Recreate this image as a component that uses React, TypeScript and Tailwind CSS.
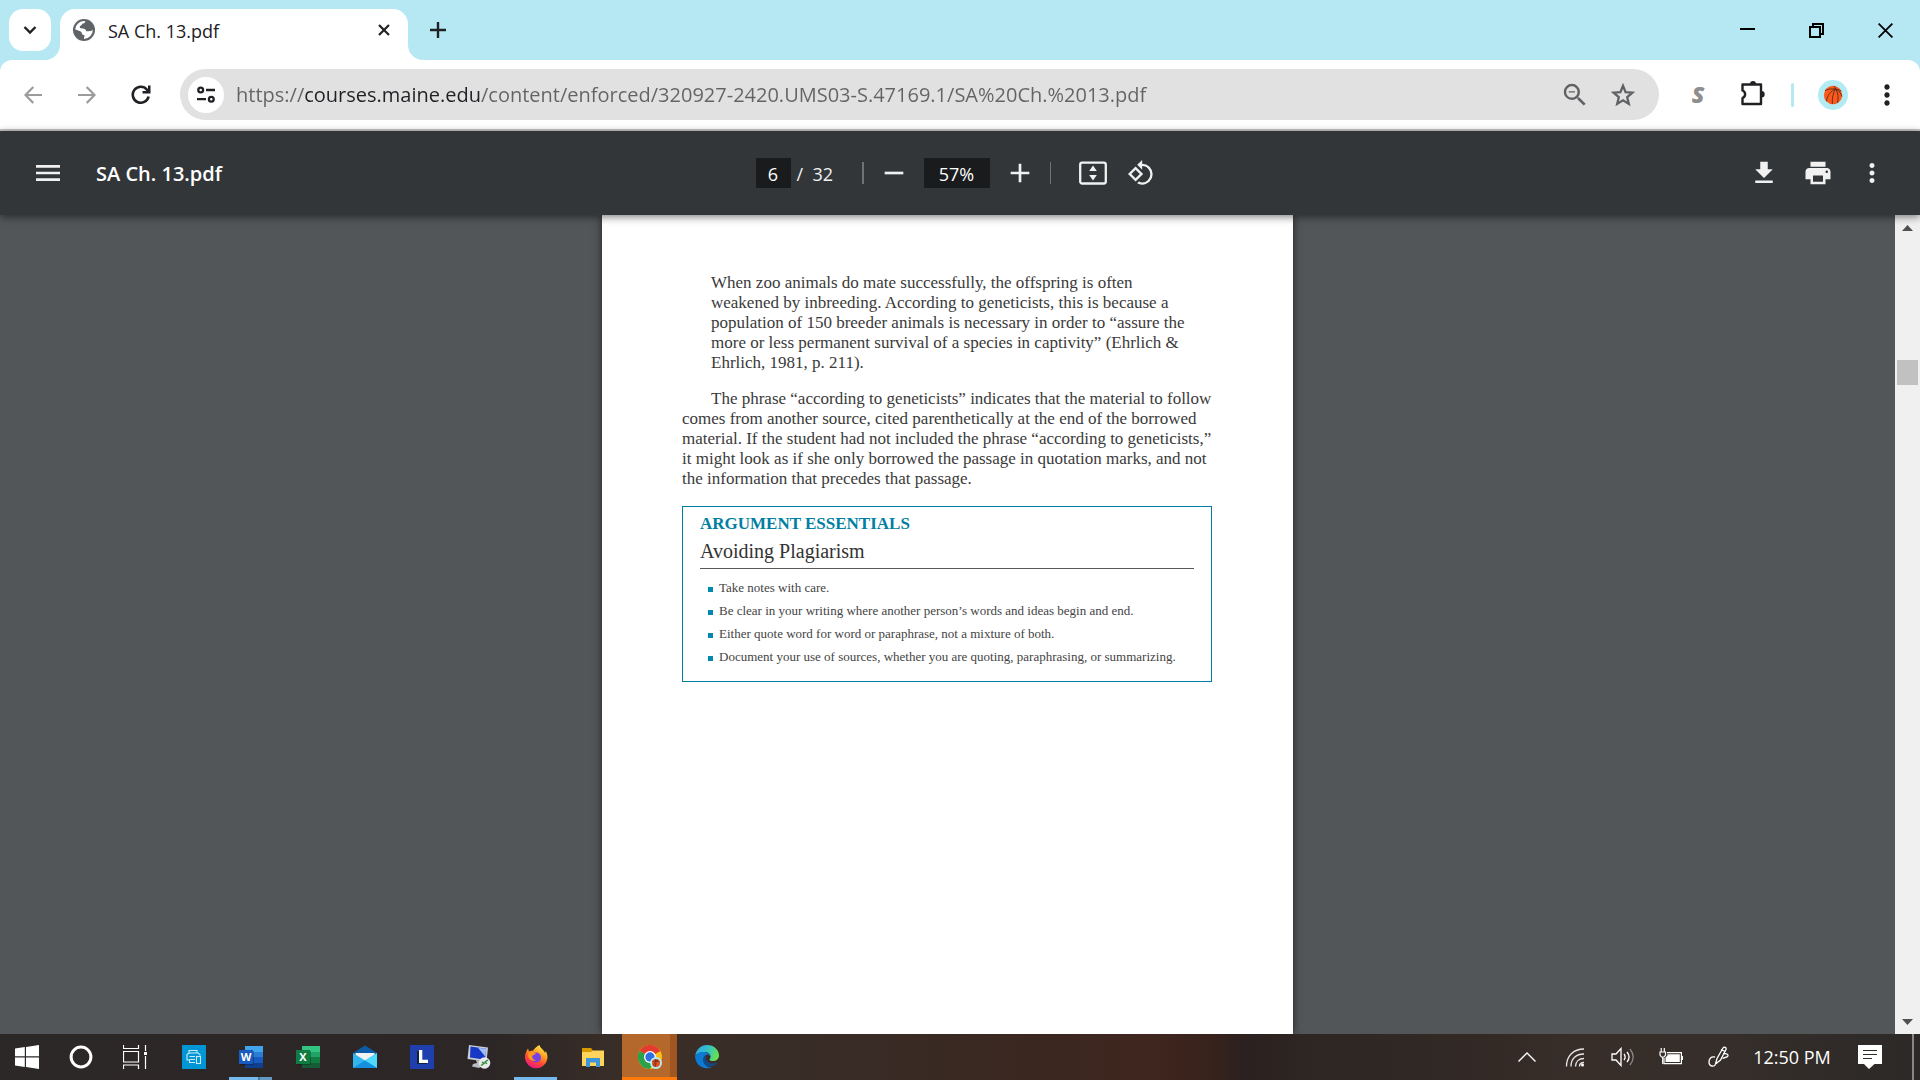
import { useState } from 'react'
import type { ReactNode } from 'react'
import {
  MdAdd,
  MdFileDownload,
  MdMenu,
  MdMoreVert,
  MdOutlineRotate90DegreesCcw,
  MdPrint,
  MdRemove,
  MdZoomOut,
} from 'react-icons/md'

type IconButtonProps = {
  label: string
  className: string
  children: ReactNode
}

function IconButton({ label, className, children }: IconButtonProps): React.ReactElement {
  return (
    <button aria-label={label} className={`flex shrink-0 items-center justify-center ${className}`}>
      {children}
    </button>
  )
}

function Basketball({ className }: { className: string }): React.ReactElement {
  return (
    <svg viewBox="0 0 30 30" className={className}>
      <circle cx="15" cy="15" r="15" fill="#b2ebf2" />
      <circle cx="15" cy="15" r="9.200" fill="#fb5a1c" />
      <g fill="none" stroke="#5a2a18" strokeWidth="0.900">
        <path d="M7 10.500c4-2 11-2.500 16.300.5" />
        <path d="M16 6c1 1 1.500 2 1.600 2.800C13 11 9 15.500 8.500 21.200" />
        <path d="M17.600 8.800C15 13 14 18 14.300 24" />
        <path d="M17.600 8.800c2.400 4 3.200 9 1.900 14.200" />
        <path d="M17.600 8.800c3 1.700 5.200 4.500 6.400 7.700" />
      </g>
    </svg>
  )
}

function TabStrip(): React.ReactElement {
  return (
    <header className="flex h-[60px] shrink-0 items-end bg-[#b5e8f3]">
      <div className="flex h-[51px] items-start pl-[9px]">
        <IconButton label="Search tabs" className="h-[42px] w-[42px] rounded-[14px] bg-white">
          <svg viewBox="0 0 14 10" className="h-[10px] w-[14px]">
            <path d="M1.500 2l5.500 5.500L12.500 2" fill="none" stroke="#202124" strokeWidth="2.400" />
          </svg>
        </IconButton>
      </div>

      {/* Active tab, flared into the toolbar below */}
      <div className="relative ml-[9px] flex h-[51px] w-[348px] items-center rounded-t-[15px] bg-white pr-3 pb-[9px] pl-[13px]">
        <svg viewBox="0 0 15 15" className="absolute bottom-0 -left-[15px] h-[15px] w-[15px]">
          <path d="M15 0v15H0C8.300 15 15 8.300 15 0z" fill="#fff" />
        </svg>
        <svg viewBox="0 0 15 15" className="absolute -right-[15px] bottom-0 h-[15px] w-[15px]">
          <path d="M0 0v15h15C6.700 15 0 8.300 0 0z" fill="#fff" />
        </svg>
        <svg viewBox="0 0 22 22" className="h-[22px] w-[22px]">
          <circle cx="11" cy="11" r="11" fill="#5f6368" />
          <path
            d="M12.500 2.200c-.3 1.800-1.600 2.300-3.200 2.600-.4 1.700-1.700 1.700-2.500 2.700-.4 1.300.8 2 2.200 2 2.500-.2 4 1 4.300 2.800 1.200.2 2-.2 3.200-.2 1.500 0 2.700-.6 3.300-1.600A9 9 0 0 1 11 20c-.3-1.500.7-2.200.5-3.700-1.700-.2-2.800-1-2.800-2.800C7 11.500 4.500 11.500 2.200 10.500A9 9 0 0 1 12.500 2.200z"
            fill="#fff"
          />
          <path d="M12.500 2.200c-.3 1.800-1.300 2.500.5 4.300 1.200.8 1 2.500 3 2.500 1 0 2.300-.2 3.700.8A9 9 0 0 0 12.500 2.200z" fill="#5f6368" />
        </svg>
        <span className="ml-[13px] flex-1 pt-0.5 text-[18px] text-[#202124]">SA Ch. 13.pdf</span>
        <IconButton label="Close tab" className="h-6 w-6">
          <svg viewBox="0 0 12 12" className="h-3 w-3">
            <path d="M1 1l10 10M11 1L1 11" stroke="#202124" strokeWidth="2.200" />
          </svg>
        </IconButton>
      </div>

      <div className="flex h-[51px] flex-1 items-start pl-[9px]">
        <IconButton label="New tab" className="h-[42px] w-[42px]">
          <svg viewBox="0 0 16 16" className="h-4 w-4">
            <path d="M8 0v16M0 8h16" stroke="#202124" strokeWidth="2.400" />
          </svg>
        </IconButton>
      </div>

      <div className="flex h-[60px]">
        <IconButton label="Minimize" className="w-[69px]">
          <svg viewBox="0 0 15 16" className="h-4 w-[15px]">
            <path d="M0 7h15" stroke="#000" strokeWidth="2" />
          </svg>
        </IconButton>
        <IconButton label="Restore" className="w-[69px]">
          <svg viewBox="0 0 15 15" className="h-[15px] w-[15px]">
            <path d="M1 4h10v10H1zM4 4V1h10v10h-3" fill="none" stroke="#000" strokeWidth="2" />
          </svg>
        </IconButton>
        <IconButton label="Close" className="w-[69px]">
          <svg viewBox="0 0 15 15" className="h-[15px] w-[15px]">
            <path d="M.6.6l13.800 13.800M14.400.6L.6 14.400" stroke="#000" strokeWidth="1.800" />
          </svg>
        </IconButton>
      </div>
    </header>
  )
}

function AddressBar(): React.ReactElement {
  const [url, setUrl] = useState('https://courses.maine.edu/content/enforced/320927-2420.UMS03-S.47169.1/SA%20Ch.%2013.pdf')

  return (
    <div className="shrink-0 bg-[#b5e8f3]">
      <nav className="flex h-[71px] items-center rounded-t-[12px] border-b-2 border-[#c7c7c7] bg-white px-1.5">
        <IconButton label="Back" className="h-12 w-[54px]">
          <svg viewBox="0 0 18 18" className="h-[18px] w-[18px]">
            <path d="M18 9H1.800M9.300 1L1.500 9l7.800 8" fill="none" stroke="#9b9b9b" strokeWidth="2.200" />
          </svg>
        </IconButton>
        <IconButton label="Forward" className="h-12 w-[54px]">
          <svg viewBox="0 0 18 18" className="h-[18px] w-[18px]">
            <path d="M0 9h16.200M8.700 1l7.800 8-7.800 8" fill="none" stroke="#9b9b9b" strokeWidth="2.200" />
          </svg>
        </IconButton>
        <IconButton label="Reload" className="h-12 w-[54px]">
          <svg viewBox="0 0 20 20" className="h-5 w-5">
            <path d="M17.600 11.500A8 8 0 1 1 16 4.700L18 7" fill="none" stroke="#202124" strokeWidth="2.600" />
            <path d="M19.500.5v8h-8V6h5.500V.5z" fill="#202124" />
          </svg>
        </IconButton>

        <div className="mx-3 flex h-[51px] min-w-0 flex-1 items-center rounded-full bg-[#e1e1e1] pr-3 pl-2">
          <IconButton label="View site information" className="h-9 w-9 rounded-full bg-white">
            <svg viewBox="0 0 18 17" className="h-[17px] w-[18px]" fill="none" stroke="#202124" strokeWidth="2.300">
              <circle cx="3.700" cy="4" r="2.400" />
              <path d="M9 4h9M0 13.200h9" />
              <circle cx="14.300" cy="13.200" r="2.400" />
            </svg>
          </IconButton>
          {/* Host part is darker than the scheme and path */}
          <input
            aria-label="Address"
            value={url}
            onChange={(e) => setUrl(e.target.value)}
            className="ml-3 h-10 min-w-0 flex-1 bg-[linear-gradient(90deg,#636363_68px,#202124_68px,#202124_245px,#636363_245px)] bg-clip-text text-[20px] text-transparent outline-none"
          />
          <IconButton label="Zoom" className="h-10 w-12">
            <MdZoomOut className="h-[30px] w-[30px] text-[#5f6164]" />
          </IconButton>
          <IconButton label="Bookmark this tab" className="h-10 w-12">
            <svg viewBox="0 0 24 24" className="h-6 w-6">
              <path
                d="M12 2.800l2.600 6.400 6.800.5-5.200 4.500 1.600 6.700-5.800-3.600-5.800 3.600 1.600-6.700-5.200-4.500 6.800-.5z"
                fill="none"
                stroke="#5f6164"
                strokeWidth="2.300"
              />
            </svg>
          </IconButton>
        </div>

        <IconButton label="S extension" className="h-12 w-[54px] text-[23px] font-extrabold text-[#8e8e8e] italic">
          S
        </IconButton>
        <IconButton label="Extensions" className="h-12 w-[54px]">
          <svg viewBox="0 0 28 28" className="h-7 w-7">
            <path
              d="M5 3.500h18v19.500H4.500v-6c3.500-1.500 3.500-6 0-7.500V3.500z"
              fill="none"
              stroke="#202124"
              strokeWidth="2.400"
              strokeLinejoin="round"
            />
            <path d="M12 3a3 3 0 0 1 6 0zM23.500 10a3.200 3.200 0 0 1 0 6.400z" fill="#202124" />
          </svg>
        </IconButton>
        <span className="mx-3 h-6 w-[3px] rounded-full bg-[#b5e8f3]" />
        <IconButton label="Profile" className="h-12 w-[54px]">
          <Basketball className="h-[30px] w-[30px]" />
        </IconButton>
        <IconButton label="Customize and control" className="h-12 w-[54px]">
          <MdMoreVert className="h-8 w-8 text-[#202124]" />
        </IconButton>
      </nav>
    </div>
  )
}

function PdfToolbar(): React.ReactElement {
  const [page, setPage] = useState('6')
  const [zoom, setZoom] = useState('57%')

  return (
    <div className="relative z-10 grid h-[84px] shrink-0 grid-cols-[1fr_auto_1fr] items-center bg-[#323639] text-[#f1f1f1] shadow-[0_2px_8px_rgba(0,0,0,0.5)]">
      <div className="flex items-center pl-6">
        <IconButton label="Menu" className="h-12 w-12">
          <MdMenu className="h-8 w-8" />
        </IconButton>
        <h1 className="ml-6 pt-0.5 text-[20px] font-semibold text-white">SA Ch. 13.pdf</h1>
      </div>

      <div className="flex items-center">
        <input
          aria-label="Page number"
          value={page}
          onChange={(e) => setPage(e.target.value)}
          className="h-[30px] w-[35px] bg-[#191b1c] pt-0.5 text-center text-[18px] text-white outline-none"
        />
        <span className="w-[71px] pt-0.5 pl-1.5 text-[18px] whitespace-pre">/  32</span>
        <span className="h-[22px] w-0.5 bg-[#707375]" />
        <IconButton label="Zoom out" className="mx-1.5 h-12 w-12">
          <MdRemove className="h-8 w-8" />
        </IconButton>
        <input
          aria-label="Zoom level"
          value={zoom}
          onChange={(e) => setZoom(e.target.value)}
          className="h-[30px] w-[66px] bg-[#191b1c] pt-0.5 text-center text-[18px] text-white outline-none"
        />
        <IconButton label="Zoom in" className="mx-1.5 h-12 w-12">
          <MdAdd className="h-8 w-8" />
        </IconButton>
        <span className="mr-[18px] h-[22px] w-px bg-[#707375]" />
        <IconButton label="Fit to page" className="h-12 w-12">
          <svg viewBox="0 0 28 24" className="h-6 w-7">
            <rect x="1.200" y="1.700" width="25.600" height="20.800" rx="2" fill="none" stroke="#f1f1f1" strokeWidth="2.300" />
            <path d="M14 4.500l3.800 5.500h-7.600zM14 19.500l3.800-5.500h-7.600z" fill="#f1f1f1" />
          </svg>
        </IconButton>
        <IconButton label="Rotate" className="h-12 w-12">
          <MdOutlineRotate90DegreesCcw className="h-[28px] w-[28px]" />
        </IconButton>
      </div>

      <div className="flex items-center justify-end pr-[21px]">
        <IconButton label="Download" className="h-12 w-[54px]">
          <MdFileDownload className="h-[30px] w-[30px]" />
        </IconButton>
        <IconButton label="Print" className="h-12 w-[54px]">
          <MdPrint className="h-[30px] w-[30px]" />
        </IconButton>
        <IconButton label="More actions" className="h-12 w-[54px]">
          <MdMoreVert className="h-[30px] w-[30px]" />
        </IconButton>
      </div>
    </div>
  )
}

const quoteLines = [
  'When zoo animals do mate successfully, the offspring is often',
  'weakened by inbreeding. According to geneticists, this is because a',
  'population of 150 breeder animals is necessary in order to “assure the',
  'more or less permanent survival of a species in captivity” (Ehrlich &',
  'Ehrlich, 1981, p. 211).',
]

const bodyLines = [
  'The phrase “according to geneticists” indicates that the material to follow',
  'comes from another source, cited parenthetically at the end of the borrowed',
  'material. If the student had not included the phrase “according to geneticists,”',
  'it might look as if she only borrowed the passage in quotation marks, and not',
  'the information that precedes that passage.',
]

const tips = [
  'Take notes with care.',
  'Be clear in your writing where another person’s words and ideas begin and end.',
  'Either quote word for word or paraphrase, not a mixture of both.',
  'Document your use of sources, whether you are quoting, paraphrasing, or summarizing.',
]

function PdfPage(): React.ReactElement {
  return (
    <article className="w-[691px] bg-white pt-[58px] pr-[81px] pl-20 font-['Liberation_Serif',serif] text-[17px] leading-5 whitespace-nowrap text-[#3a3a3a] shadow-[0_0_8px_rgba(0,0,0,0.6)]">
      <blockquote className="pl-[29px]">
        {quoteLines.map((line) => (
          <span key={line} className="block">{line}</span>
        ))}
      </blockquote>
      <p className="mt-4">
        {bodyLines.map((line) => (
          <span key={line} className="block first:pl-[29px]">{line}</span>
        ))}
      </p>

      <section className="mt-[17px] border border-[#007fa3] px-[17px] pt-[7px] pb-[13px]">
        <h2 className="font-bold text-[#007fa3]">ARGUMENT ESSENTIALS</h2>
        <h3 className="border-b border-[#58595b] py-[5px] text-[20px] leading-6 text-[#333]">Avoiding Plagiarism</h3>
        <ul className="mt-[7px] pl-2 text-[13px] leading-[23px] text-[#444]">
          {tips.map((tip) => (
            <li key={tip} className="flex items-center gap-1.5">
              <span className="mt-[3px] h-[5px] w-[5px] bg-[#0089b0]" />
              {tip}
            </li>
          ))}
        </ul>
      </section>
    </article>
  )
}

function Viewer(): React.ReactElement {
  return (
    <main className="flex min-h-0 flex-1 bg-[#525659]">
      <div className="flex min-w-0 flex-1 justify-center overflow-hidden">
        <PdfPage />
      </div>
      <div className="flex w-[25px] shrink-0 flex-col items-center bg-[#f0f0f0]">
        <IconButton label="Scroll up" className="h-[25px] w-[25px]">
          <svg viewBox="0 0 11 6" className="h-1.5 w-[11px]"><path d="M0 6L5.500 0 11 6z" fill="#505050" /></svg>
        </IconButton>
        <div className="flex-1 pt-[120px]">
          <div className="h-[25px] w-[21px] bg-[#c1c1c1]" />
        </div>
        <IconButton label="Scroll down" className="h-[25px] w-[25px]">
          <svg viewBox="0 0 11 6" className="h-1.5 w-[11px]"><path d="M0 0l5.500 6L11 0z" fill="#505050" /></svg>
        </IconButton>
      </div>
    </main>
  )
}

function OfficeIcon({ letter, colors }: { letter: string; colors: string[] }): React.ReactElement {
  return (
    <svg viewBox="0 0 24 24" className="h-6 w-6">
      <rect x="6" y="1" width="18" height="6" fill={colors[0]} />
      <rect x="6" y="7" width="18" height="5" fill={colors[1]} />
      <rect x="6" y="12" width="18" height="6" fill={colors[2]} />
      <rect x="6" y="18" width="18" height="5" fill={colors[3]} />
      <rect x="1" y="6" width="14" height="14" fill="#000" opacity="0.25" />
      <rect x="0" y="5" width="14" height="14" fill={colors[4]} />
      <text x="7" y="16" textAnchor="middle" fontSize="11" fontWeight="700" fill="#fff">{letter}</text>
    </svg>
  )
}

const WindowsIcon = (
  <svg viewBox="0 0 24 24" className="h-6 w-6">
    <path d="M0 3.400L9.800 2v9.300H0zM11 1.900L24 0v11.300H11zM0 12.600h9.800v9.300L0 20.600zM11 12.600h13V24l-13-1.900z" fill="#fff" />
  </svg>
)

const CortanaIcon = (
  <svg viewBox="0 0 24 24" className="h-6 w-6">
    <circle cx="12" cy="12" r="9.900" fill="none" stroke="#fff" strokeWidth="3" />
  </svg>
)

const TaskViewIcon = (
  <svg viewBox="0 0 24 24" className="h-6 w-6" fill="none" stroke="#fff" strokeWidth="1.200">
    <path d="M.5 0v3.500h15V0M.5 6.500h15v10.500H.5zM.5 24v-4h15v4M22.500 0v6M22.500 11v13" />
    <rect x="21" y="7" width="3" height="3" fill="#fff" stroke="none" />
  </svg>
)

const PrinterAppIcon = (
  <svg viewBox="0 0 24 24" className="h-6 w-6">
    <rect width="24" height="24" fill="#0096d6" />
    <g fill="none" stroke="#c8ecfa" strokeWidth="1.100">
      <path d="M7 8V5.500h8V8M13 17.500H7.500V15H5V9.500l2-1.500h9l2 1.500v1M7.500 11.500H13M7.500 14.500H13" />
      <rect x="14.500" y="11.500" width="4" height="7" />
    </g>
  </svg>
)

const MailIcon = (
  <svg viewBox="0 0 24 24" className="h-6 w-6">
    <path d="M0 8l12-7.500L24 8v4H0z" fill="#0b5ba8" />
    <path d="M2.500 8h19v6l-9 3-10-4z" fill="#f3f3f3" />
    <path d="M0 8l12 7.500L24 8v15H0z" fill="#30b5ee" />
    <path d="M24 8v15L12 15.500z" fill="#50d9ff" />
    <path d="M0 23l12-7.500L24 23z" fill="#1490df" />
  </svg>
)

const LIcon = (
  <svg viewBox="0 0 24 24" className="h-6 w-6">
    <rect width="24" height="24" fill="#1f3fae" />
    <path d="M7 6h3v9h7v4H7z" fill="#0d2338" />
    <path d="M9 5h3.300v9.700H18V18H9z" fill="#fff" />
  </svg>
)

const RemoteIcon = (
  <svg viewBox="0 0 24 24" className="h-6 w-6">
    <path d="M9 15l7 1v4l-4 3-7-1.500 1-2.500 4-1z" fill="#b9bcc0" />
    <path d="M2 0l19 2.500-1.500 14L.5 14z" fill="#c9cdd6" />
    <path d="M3.500 1.500l15.700 2.300-1.200 10.900-15-2.200z" fill="#1638c4" />
    <path d="M11 2.700l8.200 1.100-.8 8z" fill="#9fbdf7" />
    <circle cx="17.500" cy="18" r="5.800" fill="#e8e9ea" />
    <path d="M14 20.500l3-2-2-1.500M21 15l-3 2 2 1.700" fill="none" stroke="#2f8d36" strokeWidth="1.500" />
  </svg>
)

const FirefoxIcon = (
  <svg viewBox="0 0 24 24" className="h-6 w-6">
    <defs>
      <linearGradient id="fox" x1="0.800" y1="0" x2="0.300" y2="1">
        <stop offset="0" stopColor="#fff44f" />
        <stop offset="0.400" stopColor="#ff9a1f" />
        <stop offset="0.700" stopColor="#ff4438" />
        <stop offset="1" stopColor="#e8148a" />
      </linearGradient>
    </defs>
    <path d="M15.500 0c.3 3 4.500 4.500 5.500 8l.8-2c1.500 3 2 5.500 1.500 8A11.300 11.300 0 0 1 1 13.500C.7 10 2 6 4 3.500L5 6.500c1-.8 2.500-1 4-.7 2-3 4-4.800 6.500-5.800z" fill="url(#fox)" />
    <circle cx="12" cy="12.500" r="5" fill="#7542e5" />
    <path d="M4.500 7.500c3-1.500 6-.5 7.500 1.500-2 .3-2.500 1.500-4 1.700.2 3 2 4.500 4.500 4.500-3 1.500-7.500 0-8.500-3.700z" fill="#ff9420" />
  </svg>
)

const ExplorerIcon = (
  <svg viewBox="0 0 24 24" className="h-6 w-6">
    <path d="M1 3h9l2 2.500V9H1z" fill="#d99a00" />
    <path d="M1 7h9l2-1.500h11V21H1z" fill="#ffd45a" />
    <path d="M5 13h14v9h-4v-4.500H9V22H5z" fill="#3f95dc" />
  </svg>
)

const ChromeIcon = (
  <svg viewBox="0 0 24 24" className="h-6 w-6">
    <circle cx="12" cy="12" r="12" fill="#fbc116" />
    <path d="M12 12L1.600 6a12 12 0 0 1 20.800 0z" fill="#e33b2e" />
    <path d="M1.600 6A12 12 0 0 0 12 24l5.200-9z" fill="#2aa14b" />
    <circle cx="12" cy="12" r="6" fill="#fff" />
    <circle cx="12" cy="12" r="4.700" fill="#2f6fe0" />
    <circle cx="18" cy="18" r="6" fill="#b2ebf2" />
    <circle cx="18" cy="18" r="4" fill="#e4501f" />
    <path d="M14.500 16.500c2.500-1 5-.8 7 .5M17.500 14c.8 2.500.5 5.500-.5 8M20 14.800c-2.500 1.500-4 3.700-4.500 6" fill="none" stroke="#5a2a18" strokeWidth="0.700" />
  </svg>
)

const EdgeIcon = (
  <svg viewBox="0 0 24 24" className="h-6 w-6">
    <defs>
      <linearGradient id="edgeTop" x1="0" y1="0.200" x2="1" y2="0.500">
        <stop offset="0" stopColor="#2ba8e8" />
        <stop offset="0.500" stopColor="#35c1c8" />
        <stop offset="1" stopColor="#67e14f" />
      </linearGradient>
    </defs>
    <path d="M.2 11C1 4.500 6 0 12 0c7 0 12 5 12 10.500 0 3.500-2.700 5.500-6 5.500-2.500 0-4-.8-3.500-1.800 1-1 1-2 1-2.700C15.500 9 13 7 9.500 7 5 7 1.500 9 .2 11z" fill="url(#edgeTop)" />
    <path d="M.1 11C2 7.500 6 6.500 9.500 7c3.500.5 6 2.500 6 4.700-1-1.500-2.500-2.200-3.500-2.200-3.500 1-4.500 5-2.500 9 2 3.500 5.500 4.500 8 3.500A12 12 0 0 1 .1 11z" fill="#0c7bd4" />
    <path d="M12 9.500c-5 2-4.500 7-2.500 9.500 2.500 3.500 8 3.500 12.500-.5.500-.6 0-1-.6-.8-4.400 2-9.400 0-10.400-4-.3-1.600 0-3.200 1-4.200z" fill="#114a8b" />
  </svg>
)

const pinned = [
  { name: 'Printer', icon: PrinterAppIcon },
  { name: 'Word', icon: <OfficeIcon letter="W" colors={['#41a5ee', '#2b7cd3', '#185abd', '#103f91', '#185abd']} />, windows: 2 },
  { name: 'Excel', icon: <OfficeIcon letter="X" colors={['#33c481', '#21a366', '#107c41', '#185c37', '#107c41']} /> },
  { name: 'Mail', icon: MailIcon },
  { name: 'Lync', icon: LIcon },
  { name: 'Remote Desktop', icon: RemoteIcon },
  { name: 'Firefox', icon: FirefoxIcon, windows: 1 },
  { name: 'File Explorer', icon: ExplorerIcon },
  { name: 'Chrome', icon: ChromeIcon, active: true },
  { name: 'Edge', icon: EdgeIcon },
]

function Taskbar(): React.ReactElement {
  return (
    <footer className="flex h-[46px] shrink-0 bg-[linear-gradient(90deg,#2c2827_0%,#2c2726_26%,#3b2e27_33%,#382c27_42%,#3a2720_54%,#40261f_60%,#38221c_63%,#2b2120_65%,#2e2622_68%,#332a26_78%,#382e29_82%,#352e2a_90%,#2c2928_100%)] text-white">
      <IconButton label="Start" className="w-[54px]">{WindowsIcon}</IconButton>
      <IconButton label="Cortana" className="w-[54px]">{CortanaIcon}</IconButton>
      <IconButton label="Task View" className="w-[54px]">{TaskViewIcon}</IconButton>

      <div className="ml-1 flex flex-1 gap-0.5">
        {pinned.map((app) => (
          <button
            key={app.name}
            aria-label={app.name}
            className={`relative flex w-[55px] items-center justify-center ${app.active ? 'border-r-[7px] border-[#a05620] bg-[#b5682b] pl-[7px]' : ''}`}
          >
            {app.icon}
            {app.windows && (
              <span className="absolute inset-x-1.5 bottom-0 flex h-[3px] bg-[#76b9ed]">
                {app.windows > 1 && <span className="ml-auto w-3.5 border-l-2 border-[#4a7ba3] bg-[#6598c2]" />}
              </span>
            )}
            {app.active && <span className="absolute -right-[7px] bottom-0 left-0 h-[3px] bg-[#ff7a0a]" />}
          </button>
        ))}
      </div>

      <IconButton label="Show hidden icons" className="w-12">
        <svg viewBox="0 0 18 10" className="h-2.5 w-[18px]"><path d="M.5 9.500L9 1l8.500 8.500" fill="none" stroke="#fff" strokeWidth="1.400" /></svg>
      </IconButton>
      <IconButton label="Network" className="w-12">
        <svg viewBox="0 0 20 20" className="h-5 w-5" fill="none" stroke="#e8e8e8" strokeWidth="1.300">
          <path d="M1.500 19.500C1.500 9 8.500 2 19 2M6 19.500C6 11.500 11 7 19 7M10.500 19.500c0-5 3.500-8 8.500-8M14.500 19.500c0-2.500 2-4 4.500-4" />
          <circle cx="17.500" cy="18" r="1.500" fill="#fff" stroke="none" />
        </svg>
      </IconButton>
      <IconButton label="Volume" className="w-12">
        <svg viewBox="0 0 24 20" className="h-5 w-6" fill="none" stroke="#fff" strokeWidth="1.300">
          <path d="M1 7h4l5-5.500v17L5 13H1zM13 7c1.500 2 1.500 4 0 6M16 5c2.500 3 2.500 7 0 10" />
          <path d="M19 2c4 5 4 11 0 16" stroke="#8b8583" />
        </svg>
      </IconButton>
      <IconButton label="Battery" className="w-12">
        <svg viewBox="0 0 24 18" className="h-[18px] w-6">
          <path d="M8 4.600h14.400v11H5V10" fill="none" stroke="#fff" strokeWidth="1.200" />
          <path d="M8.500 6.200h12.300v7.800H6.500V9.500l2-2zM22.500 8H24v4h-1.500z" fill="#fff" />
          <path d="M1 4h5.500v3L5 9H2.500L1 7zM2.200 0v4M5.300 0v4M3.700 9v7" fill="none" stroke="#fff" strokeWidth="1.200" />
        </svg>
      </IconButton>
      <IconButton label="Windows Ink Workspace" className="w-12">
        <svg viewBox="0 0 22 22" className="h-[22px] w-[22px]" fill="none" stroke="#fff" strokeWidth="1.300">
          <path d="M7.500 18l1.500-5.500L15 2c1-1.500 4-.5 3 1.500L12.500 14zM13 3.500l4 2M7 11c-4-1-6 2-6 5 0 5 6 5 6.500 2M15 8c4-1 6 1 4.500 2.500S15 11 15 13" />
        </svg>
      </IconButton>
      <button className="w-[98px] text-[18px] whitespace-nowrap">12:50 PM</button>
      <IconButton label="Notifications" className="w-[58px]">
        <svg viewBox="0 0 24 24" className="h-6 w-6">
          <path d="M0 0h24v19h-7.500L11 24l-5-5H0z" fill="#fff" />
          <path d="M5 5.500h14M5 9.500h14M5 13.500h9" stroke="#332d2a" strokeWidth="1.200" />
        </svg>
      </IconButton>
      <button aria-label="Show desktop" className="ml-[13px] w-2 border-l-2 border-[#8b8583]" />
    </footer>
  )
}

export default function App(): React.ReactElement {
  return (
    <div className="flex h-screen flex-col overflow-hidden font-['Open_Sans',sans-serif]">
      <TabStrip />
      <AddressBar />
      <PdfToolbar />
      <Viewer />
      <Taskbar />
    </div>
  )
}
